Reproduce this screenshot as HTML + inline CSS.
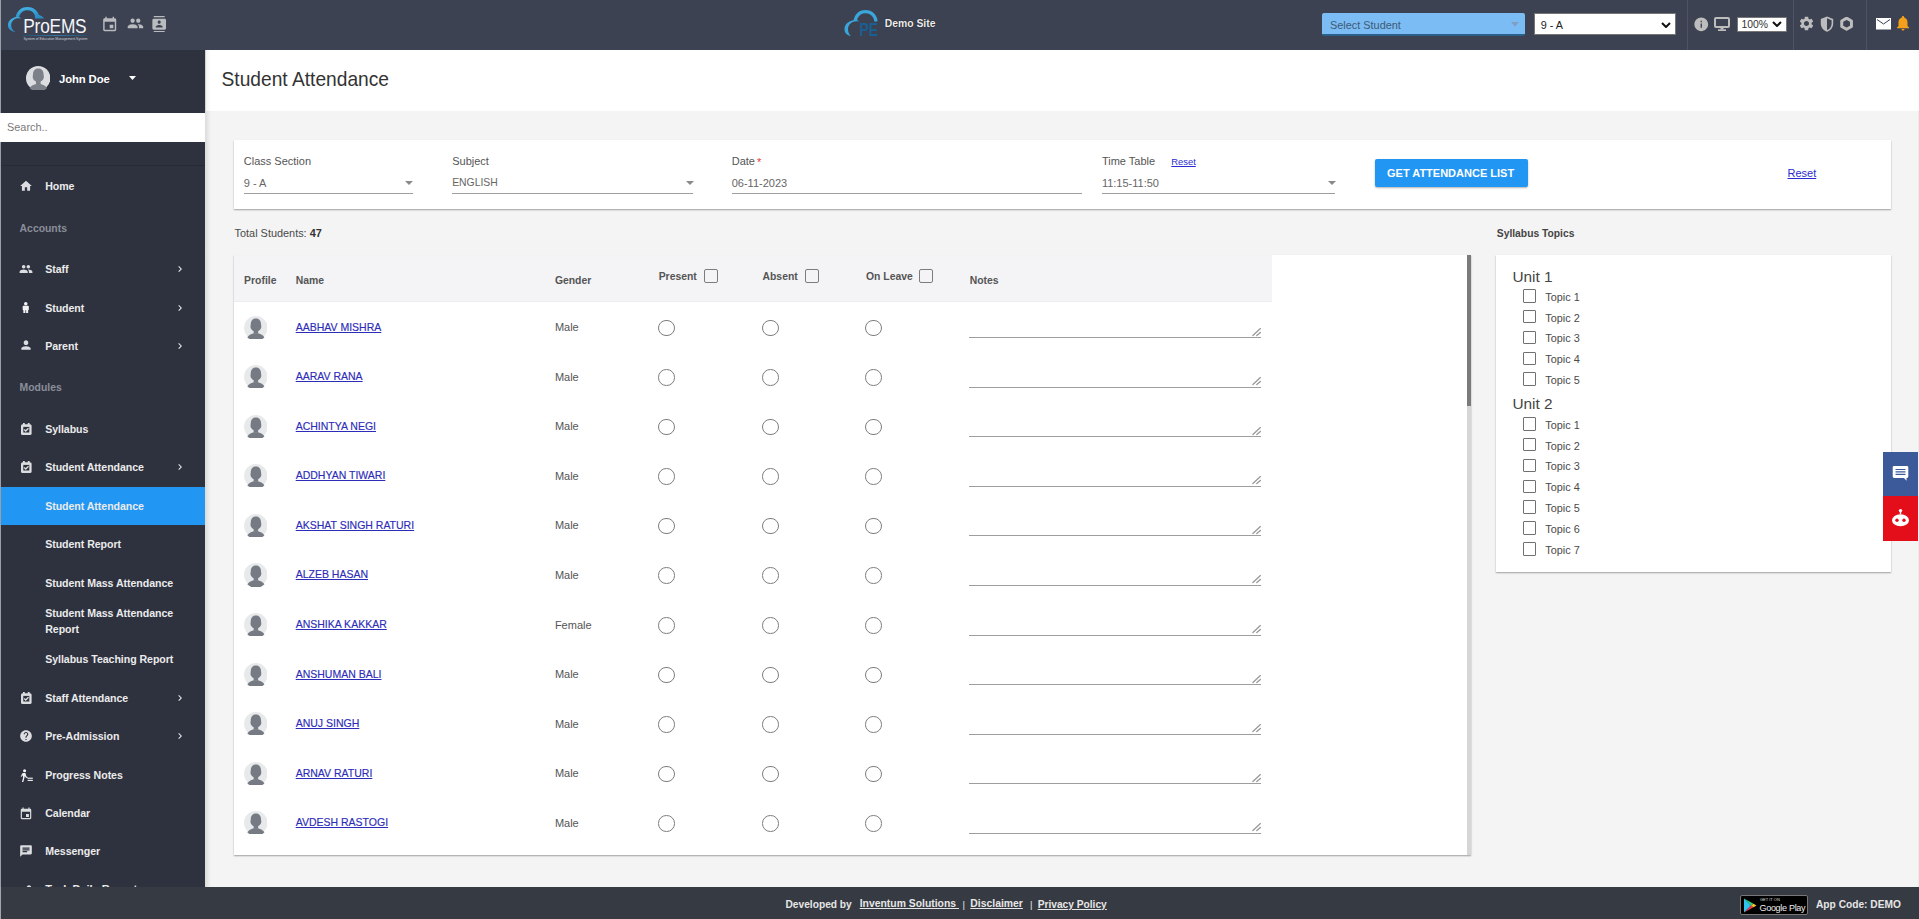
<!DOCTYPE html><html><head><meta charset="utf-8"><title>Student Attendance</title><style>
*{margin:0;padding:0;box-sizing:border-box}
html,body{width:1919px;height:919px;overflow:hidden;background:#f4f4f4;font-family:"Liberation Sans",sans-serif}
.a{position:absolute;display:block}
.t{position:absolute;line-height:1;white-space:nowrap}
.u{text-decoration:underline}
</style></head><body>
<div class="a" style="left:0px;top:0px;width:1919px;height:50px;background:#3c4252"></div>
<svg class="a" style="left:0px;top:0px;" width="50" height="40" viewBox="0 0 50 40"><defs><linearGradient id="lg" x1="0" y1="0" x2="0.3" y2="1"><stop offset="0" stop-color="#45b5e6"/><stop offset="1" stop-color="#2b8dc6"/></linearGradient></defs><path fill="url(#lg)" d="M15.5 17.5 C17 10 22 7 27.5 7 C33 7 37.5 10.5 38.8 14.8 C41 15.5 43 17 44 18.5 L35 18.5 C35.5 13.5 32 10.3 27.5 10.3 C23 10.3 20 13 19 17.5 Z"/><path fill="url(#lg)" d="M21.5 18.3 C19.5 17 18 16.8 16.5 17 C11.5 17.5 8 21 8 25 C8 29 11 31.5 15.5 32 C12.5 30.5 11.2 28 11.2 25.3 C11.2 21 14.5 18.3 18.5 18.3 Z"/></svg>
<div class="t" style="left:23.3px;top:18.75px;font-size:17.3px;color:#f4f6fa;letter-spacing:-0.2px;transform:scaleY(1.13);transform-origin:0 14.65px">ProEMS</div>
<div class="a" style="left:23px;top:35px;width:64px;height:1px;background:linear-gradient(to right,#24506e,#3479a6,#24506e)"></div>
<div class="t" style="left:23.5px;top:38.24px;font-size:3.5px;color:#c8ccd6;letter-spacing:-0.06px">System of Education Management System</div>
<svg class="a" style="left:100.8px;top:15.7px;" width="17.4" height="17.4" viewBox="0 0 24 24"><path fill="#b9bbbf" d="M17 12h-5v5h5v-5zM16 1v2H8V1H6v2H5c-1.11 0-1.99.9-1.99 2L3 19c0 1.1.89 2 2 2h14c1.1 0 2-.9 2-2V5c0-1.1-.9-2-2-2h-1V1h-2zm3 18H5V8h14v11z"/></svg>
<svg class="a" style="left:127.3px;top:15.3px;" width="16.9" height="16.9" viewBox="0 0 24 24"><path fill="#b9bbbf" d="M16 11c1.66 0 2.99-1.34 2.99-3S17.66 5 16 5c-1.66 0-3 1.34-3 3s1.34 3 3 3zm-8 0c1.66 0 2.99-1.34 2.99-3S9.660 5 8 5C6.34 5 5 6.34 5 8s1.34 3 3 3zm0 2c-2.33 0-7 1.17-7 3.5V19h14v-2.5c0-2.33-4.670-3.5-7-3.5zm8 0c-.29 0-.62.02-.97.05 1.16.84 1.97 1.97 1.97 3.45V19h6v-2.5c0-2.33-4.67-3.5-7-3.5z"/></svg>
<svg class="a" style="left:150.6px;top:15.5px;" width="16.4" height="16.4" viewBox="0 0 24 24"><path fill="#b9bbbf" d="M20 0H4v2h16V0zM4 24h16v-2H4v2zM20 4H4c-1.1 0-2 .9-2 2v12c0 1.1.9 2 2 2h16c1.1 0 2-.9 2-2V6c0-1.1-.9-2-2-2zm-8 2.75c1.24 0 2.25 1.01 2.25 2.25s-1.01 2.25-2.25 2.250S9.75 10.24 9.75 9 10.76 6.75 12 6.75zM17 17H7v-1.5c0-1.67 3.33-2.5 5-2.5s5 .83 5 2.5V17z"/></svg>
<svg class="a" style="left:838px;top:3px;" width="50" height="40" viewBox="0 0 50 40"><path fill="#3aa6dc" d="M15.5 17.5 C17 10 22 7 27.5 7 C33 7 37.5 10.5 38.8 14.8 C39.5 16 39.5 17 39.3 18.5 L36.3 18.5 C36 13.5 32 10.3 27.5 10.3 C23 10.3 20 13 19 17.5 Z"/><path fill="#3aa6dc" d="M21.5 18.3 C19.5 17 18 16.8 16.5 17 C11.5 17.5 6.5 21 6.5 26 C6.5 30.5 9.5 32.5 13 33 C11 31.5 10 29 10 26.3 C10 21.5 14 18.3 18.5 18.3 Z"/><text x="21.5" y="33" font-family="Liberation Sans" font-weight="bold" font-size="18.5" textLength="18.5" lengthAdjust="spacingAndGlyphs" fill="#1a5f92">PE</text></svg>
<div class="t" style="left:884.7px;top:19.49px;font-size:10.4px;color:#eeeeee;font-weight:bold;text-shadow:0 0 1px #000">Demo Site</div>
<div class="a" style="left:1322px;top:13px;width:203px;height:23px;background:#7bbcf5;border-radius:2px;border-bottom:2px solid #2d5f8b"></div>
<div class="t" style="left:1330px;top:19.67px;font-size:10.9px;color:#3d5a74;">Select Student</div>
<svg class="a" style="left:1511px;top:22px;" width="8" height="5" viewBox="0 0 8 5"><path d="M0 0h8L4 4.5z" fill="#7f9fc0"/></svg>
<div class="a" style="left:1534px;top:13px;width:142px;height:22px;background:#fff;border:1px solid #767676"></div>
<div class="t" style="left:1540.8px;top:19.76px;font-size:10.8px;color:#222;">9 - A</div>
<svg class="a" style="left:1661px;top:22px;" width="10" height="6" viewBox="0 0 10 6"><path d="M1 1l4 4 4-4" fill="none" stroke="#111" stroke-width="2"/></svg>
<div class="a" style="left:1687px;top:0px;width:1px;height:50px;background:#4f5363"></div>
<div class="a" style="left:1793px;top:0px;width:1px;height:50px;background:#4f5363"></div>
<div class="a" style="left:1866px;top:0px;width:1px;height:50px;background:#4f5363"></div>
<svg class="a" style="left:1693.3px;top:15.8px;" width="16.5" height="16.5" viewBox="0 0 24 24"><path fill="#bdbdbd" d="M12 2C6.48 2 2 6.48 2 12s4.48 10 10 10 10-4.48 10-10S17.52 2 12 2zm1 15h-2v-6h2v6zm0-8h-2V7h2v2z"/></svg>
<svg class="a" style="left:1714px;top:16.5px;" width="16" height="14" viewBox="0 0 16 14"><rect x="1" y="1" width="14" height="9" rx="1" fill="none" stroke="#bdbdbd" stroke-width="2"/><rect x="6.5" y="10" width="3" height="2.5" fill="#bdbdbd"/><rect x="4" y="12.3" width="8" height="1.7" fill="#bdbdbd"/></svg>
<div class="a" style="left:1737px;top:17px;width:50px;height:15px;background:#fff;border:1px solid #767676"></div>
<div class="t" style="left:1741.5px;top:19.59px;font-size:10.4px;color:#333;">100%</div>
<svg class="a" style="left:1772px;top:21px;" width="10" height="6" viewBox="0 0 10 6"><path d="M1 1l4 4 4-4" fill="none" stroke="#111" stroke-width="2"/></svg>
<svg class="a" style="left:1798px;top:15px;" width="17" height="17" viewBox="0 0 24 24"><path fill="#bdbdbd" d="M19.14 12.94c.04-.3.06-.61.06-.94 0-.32-.02-.64-.07-.94l2.03-1.58c.18-.14.23-.41.12-.61l-1.92-3.32c-.12-.22-.37-.29-.59-.22l-2.39.96c-.5-.38-1.03-.7-1.62-.94l-.36-2.54c-.04-.24-.24-.41-.48-.41h-3.84c-.24 0-.43.17-.47.41l-.36 2.54c-.59.24-1.13.57-1.62.94l-2.39-.96c-.22-.08-.47 0-.59.22L2.74 8.87c-.12.21-.08.47.12.61l2.03 1.58c-.05.3-.09.63-.09.94s.02.64.07.94l-2.03 1.58c-.18.14-.23.41-.12.61l1.92 3.32c.12.22.37.29.59.22l2.39-.96c.5.38 1.03.7 1.62.94l.36 2.54c.05.24.24.41.48.41h3.84c.24 0 .44-.17.47-.41l.36-2.54c.59-.24 1.13-.56 1.62-.94l2.39.96c.22.08.47 0 .59-.22l1.92-3.32c.12-.22.07-.47-.12-.61l-2.01-1.58zM12 15.6c-1.98 0-3.6-1.62-3.6-3.6s1.62-3.6 3.6-3.6 3.6 1.62 3.6 3.6-1.62 3.6-3.6 3.6z"/></svg>
<svg class="a" style="left:1820px;top:16px;" width="14" height="16" viewBox="0 0 14 16"><path d="M7 0.5L0.8 3v4.5c0 4 2.7 7.3 6.2 8.2 3.5-.9 6.2-4.2 6.2-8.2V3z" fill="#bdbdbd"/><path d="M7 2.3L11.6 4.2v3.3c0 3.1-2 5.8-4.6 6.6z" fill="#3c4252"/></svg>
<svg class="a" style="left:1840.2px;top:17px;" width="13.2" height="14" viewBox="0 0 14 15"><path d="M7 1.2l5.2 3v6l-5.2 3-5.2-3v-6z" fill="none" stroke="#bdbdbd" stroke-width="3.2" stroke-linejoin="round"/></svg>
<svg class="a" style="left:1876px;top:18px;" width="15" height="12" viewBox="0 0 15 12"><rect x="0" y="0" width="15" height="11.5" fill="#fff"/><path d="M1 1.5l6.5 4.5 6.5-4.5" fill="none" stroke="#3c4252" stroke-width="1"/></svg>
<svg class="a" style="left:1894px;top:14px;" width="18" height="18" viewBox="0 0 24 24"><path fill="#f5a01a" d="M12 22c1.1 0 2-.9 2-2h-4c0 1.1.89 2 2 2zm6-6v-5c0-3.07-1.64-5.64-4.5-6.32V4c0-.83-.67-1.5-1.5-1.5s-1.5.67-1.5 1.5v.68C7.63 5.36 6 7.92 6 11v5l-2 2v1h16v-1l-2-2z"/></svg>
<div class="a" style="left:0px;top:50px;width:205px;height:837px;background:#2e323f"></div>
<div class="a" style="left:0px;top:0px;width:1px;height:919px;background:#9a9ea6"></div>
<div class="a" style="left:205px;top:50px;width:6px;height:837px;background:linear-gradient(to right,rgba(0,0,0,.10),rgba(0,0,0,0))"></div>
<svg class="a" style="left:26.099999999999998px;top:65.8px;" width="24.4" height="24.4" viewBox="0 0 24 24"><circle cx="12" cy="12" r="12" fill="#dcdde0"/><g fill="#7c8189"><path d="M6.9 8.2C6.9 4.4 9.2 2.5 12.1 2.5S17.3 4.4 17.3 8.2L17.6 10.6C17.6 13.6 15.2 15.6 12.1 15.6S6.6 13.6 6.6 10.6Z"/><rect x="9.8" y="13" width="4.6" height="5"/><path d="M3.4 21.6C4.8 19.2 8.2 18.1 10 17.6H14.2C16 18.1 19.4 19.2 20.8 21.6A12 12 0 0 1 3.4 21.6Z"/></g></svg>
<div class="t" style="left:59px;top:73.83px;font-size:11.3px;color:#fff;font-weight:bold;letter-spacing:-0.1px">John Doe</div>
<svg class="a" style="left:129px;top:76px;" width="7" height="4" viewBox="0 0 7 4"><path d="M0 0h7L3.5 4z" fill="#fff"/></svg>
<div class="a" style="left:0px;top:113px;width:205px;height:29px;background:#fff"></div>
<div class="t" style="left:7px;top:121.77px;font-size:10.9px;color:#7a7a7a;">Search..</div>
<div class="a" style="left:1px;top:165px;width:204px;height:1px;background:#272a35"></div>
<div class="t" style="left:45.2px;top:181.02px;font-size:10.6px;color:#ebebeb;font-weight:bold;letter-spacing:-0.05px">Home</div>
<svg class="a" style="left:19.2px;top:178.7px;" width="14" height="14" viewBox="0 0 24 24"><path fill="#dcdde0" d="M10 20v-6h4v6h5v-8h3L12 3 2 12h3v8z"/></svg>
<div class="t" style="left:19.6px;top:223.99px;font-size:10.4px;color:#8a8e98;font-weight:bold;">Accounts</div>
<div class="t" style="left:45.2px;top:263.92px;font-size:10.6px;color:#ebebeb;font-weight:bold;letter-spacing:-0.05px">Staff</div>
<svg class="a" style="left:19px;top:262px;" width="14" height="14" viewBox="0 0 24 24"><path fill="#dcdde0" d="M16 11c1.66 0 2.99-1.34 2.99-3S17.66 5 16 5c-1.66 0-3 1.34-3 3s1.34 3 3 3zm-8 0c1.66 0 2.99-1.34 2.99-3S9.660 5 8 5C6.34 5 5 6.34 5 8s1.34 3 3 3zm0 2c-2.33 0-7 1.17-7 3.5V19h14v-2.5c0-2.33-4.670-3.5-7-3.5zm8 0c-.29 0-.62.02-.97.05 1.16.84 1.97 1.97 1.97 3.45V19h6v-2.5c0-2.33-4.67-3.5-7-3.5z"/></svg>
<svg class="a" style="left:173.7px;top:262.59999999999997px;" width="12" height="12" viewBox="0 0 24 24"><path fill="#ebebeb" d="M10 6L8.59 7.41 13.17 12l-4.58 4.59L10 18l6-6z"/></svg>
<svg class="a" style="left:21.3px;top:301.5px;" width="9.5" height="11.5" viewBox="0 0 10 13"><circle cx="5" cy="2" r="2" fill="#f2f2f2"/><rect x="1.5" y="4.3" width="7" height="5" rx="1" fill="#f2f2f2"/><rect x="2.3" y="9" width="2.3" height="4" fill="#f2f2f2"/><rect x="5.4" y="9" width="2.3" height="4" fill="#f2f2f2"/></svg>
<div class="t" style="left:45.2px;top:303.02px;font-size:10.6px;color:#ebebeb;font-weight:bold;letter-spacing:-0.05px">Student</div>
<svg class="a" style="left:173.7px;top:301.7px;" width="12" height="12" viewBox="0 0 24 24"><path fill="#ebebeb" d="M10 6L8.59 7.41 13.17 12l-4.58 4.59L10 18l6-6z"/></svg>
<div class="t" style="left:45.2px;top:340.82px;font-size:10.6px;color:#ebebeb;font-weight:bold;letter-spacing:-0.05px">Parent</div>
<svg class="a" style="left:19px;top:338px;" width="14" height="14" viewBox="0 0 24 24"><path fill="#dcdde0" d="M12 12c2.21 0 4-1.79 4-4s-1.79-4-4-4-4 1.79-4 4 1.79 4 4 4zm0 2c-2.67 0-8 1.34-8 4v2h16v-2c0-2.66-5.33-4-8-4z"/></svg>
<svg class="a" style="left:173.7px;top:339.5px;" width="12" height="12" viewBox="0 0 24 24"><path fill="#ebebeb" d="M10 6L8.59 7.41 13.17 12l-4.58 4.59L10 18l6-6z"/></svg>
<div class="t" style="left:19.6px;top:382.69px;font-size:10.4px;color:#8a8e98;font-weight:bold;">Modules</div>
<div class="t" style="left:45.2px;top:424.22px;font-size:10.6px;color:#ebebeb;font-weight:bold;letter-spacing:-0.05px">Syllabus</div>
<svg class="a" style="left:21px;top:422.8px;" width="11" height="12" viewBox="0 0 11 12"><rect x="0" y="1.2" width="10.6" height="10.8" rx="1.6" fill="#dcdde0"/><rect x="2.3" y="3.9" width="6" height="5.6" fill="#2e323f"/><path d="M3.2 6.6l1.5 1.4 2.8-2.8" stroke="#dcdde0" stroke-width="1.3" fill="none"/><rect x="2" y="0" width="1.8" height="2" fill="#dcdde0"/><rect x="6.8" y="0" width="1.8" height="2" fill="#dcdde0"/></svg>
<div class="t" style="left:45.2px;top:462.22px;font-size:10.6px;color:#ebebeb;font-weight:bold;letter-spacing:-0.05px">Student Attendance</div>
<svg class="a" style="left:21px;top:460.8px;" width="11" height="12" viewBox="0 0 11 12"><rect x="0" y="1.2" width="10.6" height="10.8" rx="1.6" fill="#dcdde0"/><rect x="2.3" y="3.9" width="6" height="5.6" fill="#2e323f"/><path d="M3.2 6.6l1.5 1.4 2.8-2.8" stroke="#dcdde0" stroke-width="1.3" fill="none"/><rect x="2" y="0" width="1.8" height="2" fill="#dcdde0"/><rect x="6.8" y="0" width="1.8" height="2" fill="#dcdde0"/></svg>
<svg class="a" style="left:173.7px;top:460.9px;" width="12" height="12" viewBox="0 0 24 24"><path fill="#ebebeb" d="M10 6L8.59 7.41 13.17 12l-4.58 4.59L10 18l6-6z"/></svg>
<div class="a" style="left:1px;top:487px;width:204px;height:38px;background:#2196f3"></div>
<div class="t" style="left:45.2px;top:500.92px;font-size:10.6px;color:#ebebeb;font-weight:bold;letter-spacing:-0.05px">Student Attendance</div>
<div class="t" style="left:45.2px;top:539.42px;font-size:10.6px;color:#ebebeb;font-weight:bold;letter-spacing:-0.05px">Student Report</div>
<div class="t" style="left:45.2px;top:578.02px;font-size:10.6px;color:#ebebeb;font-weight:bold;letter-spacing:-0.05px">Student Mass Attendance</div>
<div class="t" style="left:45.2px;top:608.12px;font-size:10.6px;color:#ebebeb;font-weight:bold;letter-spacing:-0.05px">Student Mass Attendance</div>
<div class="t" style="left:45.2px;top:623.82px;font-size:10.6px;color:#ebebeb;font-weight:bold;letter-spacing:-0.05px">Report</div>
<div class="t" style="left:45.2px;top:654.02px;font-size:10.6px;color:#ebebeb;font-weight:bold;letter-spacing:-0.05px">Syllabus Teaching Report</div>
<div class="t" style="left:45.2px;top:692.92px;font-size:10.6px;color:#ebebeb;font-weight:bold;letter-spacing:-0.05px">Staff Attendance</div>
<svg class="a" style="left:21px;top:691.5px;" width="11" height="12" viewBox="0 0 11 12"><rect x="0" y="1.2" width="10.6" height="10.8" rx="1.6" fill="#dcdde0"/><rect x="2.3" y="3.9" width="6" height="5.6" fill="#2e323f"/><path d="M3.2 6.6l1.5 1.4 2.8-2.8" stroke="#dcdde0" stroke-width="1.3" fill="none"/><rect x="2" y="0" width="1.8" height="2" fill="#dcdde0"/><rect x="6.8" y="0" width="1.8" height="2" fill="#dcdde0"/></svg>
<svg class="a" style="left:173.7px;top:691.6px;" width="12" height="12" viewBox="0 0 24 24"><path fill="#ebebeb" d="M10 6L8.59 7.41 13.17 12l-4.58 4.59L10 18l6-6z"/></svg>
<div class="t" style="left:45.2px;top:730.82px;font-size:10.6px;color:#ebebeb;font-weight:bold;letter-spacing:-0.05px">Pre-Admission</div>
<svg class="a" style="left:19px;top:728.5px;" width="14" height="14" viewBox="0 0 24 24"><path fill="#dcdde0" d="M12 2C6.48 2 2 6.48 2 12s4.48 10 10 10 10-4.48 10-10S17.520 2 12 2zm1 17h-2v-2h2v2zm2.07-7.75l-.9.92C13.45 12.9 13 13.5 13 15h-2v-.5c0-1.1.45-2.1 1.17-2.83l1.24-1.26c.37-.36.59-.86.59-1.41 0-1.1-.9-2-2-2s-2 .9-2 2H8c0-2.21 1.79-4 4-4s4 1.79 4 4c0 .88-.36 1.68-.93 2.25z"/></svg>
<svg class="a" style="left:173.7px;top:729.5px;" width="12" height="12" viewBox="0 0 24 24"><path fill="#ebebeb" d="M10 6L8.59 7.41 13.17 12l-4.58 4.59L10 18l6-6z"/></svg>
<svg class="a" style="left:20px;top:768.5px;" width="13.5" height="13" viewBox="0 0 15 15"><circle cx="5" cy="2" r="1.8" fill="#f2f2f2"/><path d="M3 4.5h3l1 4 1.5 1V11L6 9.5 5.3 8 4.5 11.5 3.5 15H2l1.3-5.2L2.8 7.2 1.5 9H0.5l1.6-3.5z" fill="#f2f2f2"/><rect x="8.5" y="10" width="6" height="1.3" fill="#f2f2f2"/><rect x="8.5" y="12.5" width="6" height="1.3" fill="#f2f2f2"/></svg>
<div class="t" style="left:45.2px;top:769.72px;font-size:10.6px;color:#ebebeb;font-weight:bold;letter-spacing:-0.05px">Progress Notes</div>
<div class="t" style="left:45.2px;top:808.02px;font-size:10.6px;color:#ebebeb;font-weight:bold;letter-spacing:-0.05px">Calendar</div>
<svg class="a" style="left:19px;top:806.5px;" width="14" height="14" viewBox="0 0 24 24"><path fill="#dcdde0" d="M17 12h-5v5h5v-5zM16 1v2H8V1H6v2H5c-1.11 0-1.99.9-1.99 2L3 19c0 1.1.89 2 2 2h14c1.1 0 2-.9 2-2V5c0-1.1-.9-2-2-2h-1V1h-2zm3 18H5V8h14v11z"/></svg>
<div class="t" style="left:45.2px;top:846.32px;font-size:10.6px;color:#ebebeb;font-weight:bold;letter-spacing:-0.05px">Messenger</div>
<svg class="a" style="left:19px;top:844px;" width="14" height="14" viewBox="0 0 24 24"><path fill="#dcdde0" d="M20 2H4c-1.1 0-1.99.9-1.99 2L2 22l4-4h14c1.1 0 2-.9 2-2V4c0-1.1-.9-2-2-2zM6 9h12v2H6V9zm8 5H6v-2h8v2zm4-6H6V6h12v2z"/></svg>
<div class="t" style="left:45.2px;top:884.10px;font-size:11.1px;color:#ebebeb;font-weight:bold;letter-spacing:-0.05px">Task Daily Report</div>
<svg class="a" style="left:22px;top:882.5px;" width="14" height="14" viewBox="0 0 24 24"><path fill="#dcdde0" d="M12 12c2.21 0 4-1.79 4-4s-1.79-4-4-4-4 1.79-4 4 1.79 4 4 4zm0 2c-2.67 0-8 1.34-8 4v2h16v-2c0-2.66-5.33-4-8-4z"/></svg>
<div class="a" style="left:206px;top:50px;width:1713px;height:61px;background:#fff"></div>
<div class="a" style="left:205px;top:50px;width:6px;height:61px;background:linear-gradient(to right,rgba(0,0,0,.06),rgba(0,0,0,0))"></div>
<div class="t" style="left:221.5px;top:69.54px;font-size:19.2px;color:#333;transform:scaleY(1.09);transform-origin:0 16.26px">Student Attendance</div>
<div class="a" style="left:234px;top:140px;width:1657px;height:69px;background:#fff;box-shadow:0 1px 1.5px rgba(0,0,0,.35)"></div>
<div class="t" style="left:243.75px;top:155.59px;font-size:11px;color:#555;">Class Section</div>
<div class="t" style="left:243.75px;top:177.89px;font-size:11px;color:#666;">9 - A</div>
<div class="a" style="left:243.75px;top:193px;width:169.55px;height:1px;background:#9e9e9e"></div>
<svg class="a" style="left:405.3px;top:181px;" width="8" height="4" viewBox="0 0 8 4"><path d="M0 0h8L4 4z" fill="#8a8a8a"/></svg>
<div class="t" style="left:452.2px;top:155.59px;font-size:11px;color:#555;">Subject</div>
<div class="t" style="left:452.2px;top:178.39px;font-size:10.4px;color:#666;">ENGLISH</div>
<div class="a" style="left:452.2px;top:193px;width:241.3px;height:1px;background:#9e9e9e"></div>
<svg class="a" style="left:685.5px;top:181px;" width="8" height="4" viewBox="0 0 8 4"><path d="M0 0h8L4 4z" fill="#8a8a8a"/></svg>
<div class="t" style="left:731.7px;top:155.59px;font-size:11px;color:#555;">Date</div>
<div class="t" style="left:731.7px;top:177.89px;font-size:11px;color:#666;">06-11-2023</div>
<div class="a" style="left:731.7px;top:193px;width:350.70000000000005px;height:1px;background:#9e9e9e"></div>
<div class="t" style="left:757px;top:156.69px;font-size:11px;color:#e53935;">*</div>
<div class="t" style="left:1101.9px;top:155.59px;font-size:11px;color:#555;">Time Table</div>
<div class="t" style="left:1101.9px;top:177.89px;font-size:11px;color:#666;">11:15-11:50</div>
<div class="a" style="left:1101.9px;top:193px;width:233.5999999999999px;height:1px;background:#9e9e9e"></div>
<svg class="a" style="left:1327.5px;top:181px;" width="8" height="4" viewBox="0 0 8 4"><path d="M0 0h8L4 4z" fill="#8a8a8a"/></svg>
<div class="t u" style="left:1171.3px;top:157.34px;font-size:9.4px;color:#2a2ad0;">Reset</div>
<div class="a" style="left:1374.5px;top:159px;width:153px;height:28px;background:#2196f3;border-radius:2px;box-shadow:0 1px 2px rgba(0,0,0,.3)"></div>
<div class="t" style="left:1387px;top:167.79px;font-size:11px;color:#fff;font-weight:bold;">GET ATTENDANCE LIST</div>
<div class="t u" style="left:1787.5px;top:168.09px;font-size:11px;color:#2a2ad0;">Reset</div>
<div class="t" style="left:234.6px;top:228.07px;font-size:10.9px;color:#4a4a4a;">Total Students: <b style="color:#333">47</b></div>
<div class="a" style="left:234px;top:255px;width:1237px;height:600px;background:#fff;box-shadow:0 1px 1.5px rgba(0,0,0,.35)"></div>
<div class="a" style="left:234px;top:255px;width:1038px;height:46.5px;background:#f4f4f7;border-bottom:1px solid #ebecef"></div>
<div class="t" style="left:244.1px;top:275.59px;font-size:10.4px;color:#555;font-weight:bold;">Profile</div>
<div class="t" style="left:295.7px;top:275.59px;font-size:10.4px;color:#555;font-weight:bold;">Name</div>
<div class="t" style="left:554.9px;top:275.59px;font-size:10.4px;color:#555;font-weight:bold;">Gender</div>
<div class="t" style="left:658.7px;top:272.19px;font-size:10.4px;color:#555;font-weight:bold;">Present</div>
<div class="t" style="left:762.5px;top:272.19px;font-size:10.4px;color:#555;font-weight:bold;">Absent</div>
<div class="t" style="left:866px;top:272.19px;font-size:10.4px;color:#555;font-weight:bold;">On Leave</div>
<div class="t" style="left:969.7px;top:275.59px;font-size:10.4px;color:#555;font-weight:bold;">Notes</div>
<div class="a" style="left:704.3px;top:269.4px;width:14px;height:13.5px;border:1.6px solid #7c7c7c;border-radius:2px"></div>
<div class="a" style="left:805px;top:269.4px;width:14px;height:13.5px;border:1.6px solid #7c7c7c;border-radius:2px"></div>
<div class="a" style="left:919.4px;top:269.4px;width:14px;height:13.5px;border:1.6px solid #7c7c7c;border-radius:2px"></div>
<svg class="a" style="left:243.5px;top:315.7px;" width="23.6" height="23.6" viewBox="0 0 24 24"><circle cx="12" cy="12" r="12" fill="#e8e9eb"/><g fill="#767b83"><path d="M6.9 8.2C6.9 4.4 9.2 2.5 12.1 2.5S17.3 4.4 17.3 8.2L17.6 10.6C17.6 13.6 15.2 15.6 12.1 15.6S6.6 13.6 6.6 10.6Z"/><rect x="9.8" y="13" width="4.6" height="5"/><path d="M3.4 21.6C4.8 19.2 8.2 18.1 10 17.6H14.2C16 18.1 19.4 19.2 20.8 21.6A12 12 0 0 1 3.4 21.6Z"/></g></svg>
<div class="t u" style="left:295.7px;top:322.01px;font-size:10.5px;color:#2c2cb8;-webkit-text-stroke:0.15px #2c2cb8">AABHAV MISHRA</div>
<div class="t" style="left:554.9px;top:322.39px;font-size:11px;color:#555;">Male</div>
<div class="a" style="left:658.4px;top:319.8px;width:16.5px;height:16.5px;border:1.4px solid #7e7e7e;border-radius:50%"></div>
<div class="a" style="left:762.3px;top:319.8px;width:16.5px;height:16.5px;border:1.4px solid #7e7e7e;border-radius:50%"></div>
<div class="a" style="left:865.4px;top:319.8px;width:16.5px;height:16.5px;border:1.4px solid #7e7e7e;border-radius:50%"></div>
<div class="a" style="left:969px;top:337.3px;width:292.3px;height:1.2px;background:#9e9e9e"></div>
<svg class="a" style="left:1250px;top:327.8px;" width="12" height="10" viewBox="0 0 12 10"><path d="M2.9 7.6L10.4 .6M6.8 7.6L10.4 4.4" stroke="#9a9a9a" stroke-width="1.3" stroke-linecap="round"/></svg>
<svg class="a" style="left:243.5px;top:364.9px;" width="23.6" height="23.6" viewBox="0 0 24 24"><circle cx="12" cy="12" r="12" fill="#e8e9eb"/><g fill="#767b83"><path d="M6.9 8.2C6.9 4.4 9.2 2.5 12.1 2.5S17.3 4.4 17.3 8.2L17.6 10.6C17.6 13.6 15.2 15.6 12.1 15.6S6.6 13.6 6.6 10.6Z"/><rect x="9.8" y="13" width="4.6" height="5"/><path d="M3.4 21.6C4.8 19.2 8.2 18.1 10 17.6H14.2C16 18.1 19.4 19.2 20.8 21.6A12 12 0 0 1 3.4 21.6Z"/></g></svg>
<div class="t u" style="left:295.7px;top:371.21px;font-size:10.5px;color:#2c2cb8;-webkit-text-stroke:0.15px #2c2cb8">AARAV RANA</div>
<div class="t" style="left:554.9px;top:371.59px;font-size:11px;color:#555;">Male</div>
<div class="a" style="left:658.4px;top:369px;width:16.5px;height:16.5px;border:1.4px solid #7e7e7e;border-radius:50%"></div>
<div class="a" style="left:762.3px;top:369px;width:16.5px;height:16.5px;border:1.4px solid #7e7e7e;border-radius:50%"></div>
<div class="a" style="left:865.4px;top:369px;width:16.5px;height:16.5px;border:1.4px solid #7e7e7e;border-radius:50%"></div>
<div class="a" style="left:969px;top:386.5px;width:292.3px;height:1.2px;background:#9e9e9e"></div>
<svg class="a" style="left:1250px;top:377px;" width="12" height="10" viewBox="0 0 12 10"><path d="M2.9 7.6L10.4 .6M6.8 7.6L10.4 4.4" stroke="#9a9a9a" stroke-width="1.3" stroke-linecap="round"/></svg>
<svg class="a" style="left:243.5px;top:414.59999999999997px;" width="23.6" height="23.6" viewBox="0 0 24 24"><circle cx="12" cy="12" r="12" fill="#e8e9eb"/><g fill="#767b83"><path d="M6.9 8.2C6.9 4.4 9.2 2.5 12.1 2.5S17.3 4.4 17.3 8.2L17.6 10.6C17.6 13.6 15.2 15.6 12.1 15.6S6.6 13.6 6.6 10.6Z"/><rect x="9.8" y="13" width="4.6" height="5"/><path d="M3.4 21.6C4.8 19.2 8.2 18.1 10 17.6H14.2C16 18.1 19.4 19.2 20.8 21.6A12 12 0 0 1 3.4 21.6Z"/></g></svg>
<div class="t u" style="left:295.7px;top:420.91px;font-size:10.5px;color:#2c2cb8;-webkit-text-stroke:0.15px #2c2cb8">ACHINTYA NEGI</div>
<div class="t" style="left:554.9px;top:421.29px;font-size:11px;color:#555;">Male</div>
<div class="a" style="left:658.4px;top:418.7px;width:16.5px;height:16.5px;border:1.4px solid #7e7e7e;border-radius:50%"></div>
<div class="a" style="left:762.3px;top:418.7px;width:16.5px;height:16.5px;border:1.4px solid #7e7e7e;border-radius:50%"></div>
<div class="a" style="left:865.4px;top:418.7px;width:16.5px;height:16.5px;border:1.4px solid #7e7e7e;border-radius:50%"></div>
<div class="a" style="left:969px;top:436.2px;width:292.3px;height:1.2px;background:#9e9e9e"></div>
<svg class="a" style="left:1250px;top:426.7px;" width="12" height="10" viewBox="0 0 12 10"><path d="M2.9 7.6L10.4 .6M6.8 7.6L10.4 4.4" stroke="#9a9a9a" stroke-width="1.3" stroke-linecap="round"/></svg>
<svg class="a" style="left:243.5px;top:463.9px;" width="23.6" height="23.6" viewBox="0 0 24 24"><circle cx="12" cy="12" r="12" fill="#e8e9eb"/><g fill="#767b83"><path d="M6.9 8.2C6.9 4.4 9.2 2.5 12.1 2.5S17.3 4.4 17.3 8.2L17.6 10.6C17.6 13.6 15.2 15.6 12.1 15.6S6.6 13.6 6.6 10.6Z"/><rect x="9.8" y="13" width="4.6" height="5"/><path d="M3.4 21.6C4.8 19.2 8.2 18.1 10 17.6H14.2C16 18.1 19.4 19.2 20.8 21.6A12 12 0 0 1 3.4 21.6Z"/></g></svg>
<div class="t u" style="left:295.7px;top:470.21px;font-size:10.5px;color:#2c2cb8;-webkit-text-stroke:0.15px #2c2cb8">ADDHYAN TIWARI</div>
<div class="t" style="left:554.9px;top:470.59px;font-size:11px;color:#555;">Male</div>
<div class="a" style="left:658.4px;top:468px;width:16.5px;height:16.5px;border:1.4px solid #7e7e7e;border-radius:50%"></div>
<div class="a" style="left:762.3px;top:468px;width:16.5px;height:16.5px;border:1.4px solid #7e7e7e;border-radius:50%"></div>
<div class="a" style="left:865.4px;top:468px;width:16.5px;height:16.5px;border:1.4px solid #7e7e7e;border-radius:50%"></div>
<div class="a" style="left:969px;top:485.5px;width:292.3px;height:1.2px;background:#9e9e9e"></div>
<svg class="a" style="left:1250px;top:476px;" width="12" height="10" viewBox="0 0 12 10"><path d="M2.9 7.6L10.4 .6M6.8 7.6L10.4 4.4" stroke="#9a9a9a" stroke-width="1.3" stroke-linecap="round"/></svg>
<svg class="a" style="left:243.5px;top:513.7px;" width="23.6" height="23.6" viewBox="0 0 24 24"><circle cx="12" cy="12" r="12" fill="#e8e9eb"/><g fill="#767b83"><path d="M6.9 8.2C6.9 4.4 9.2 2.5 12.1 2.5S17.3 4.4 17.3 8.2L17.6 10.6C17.6 13.6 15.2 15.6 12.1 15.6S6.6 13.6 6.6 10.6Z"/><rect x="9.8" y="13" width="4.6" height="5"/><path d="M3.4 21.6C4.8 19.2 8.2 18.1 10 17.6H14.2C16 18.1 19.4 19.2 20.8 21.6A12 12 0 0 1 3.4 21.6Z"/></g></svg>
<div class="t u" style="left:295.7px;top:520.01px;font-size:10.5px;color:#2c2cb8;-webkit-text-stroke:0.15px #2c2cb8">AKSHAT SINGH RATURI</div>
<div class="t" style="left:554.9px;top:520.39px;font-size:11px;color:#555;">Male</div>
<div class="a" style="left:658.4px;top:517.8px;width:16.5px;height:16.5px;border:1.4px solid #7e7e7e;border-radius:50%"></div>
<div class="a" style="left:762.3px;top:517.8px;width:16.5px;height:16.5px;border:1.4px solid #7e7e7e;border-radius:50%"></div>
<div class="a" style="left:865.4px;top:517.8px;width:16.5px;height:16.5px;border:1.4px solid #7e7e7e;border-radius:50%"></div>
<div class="a" style="left:969px;top:535.3px;width:292.3px;height:1.2px;background:#9e9e9e"></div>
<svg class="a" style="left:1250px;top:525.8px;" width="12" height="10" viewBox="0 0 12 10"><path d="M2.9 7.6L10.4 .6M6.8 7.6L10.4 4.4" stroke="#9a9a9a" stroke-width="1.3" stroke-linecap="round"/></svg>
<svg class="a" style="left:243.5px;top:563.1000000000001px;" width="23.6" height="23.6" viewBox="0 0 24 24"><circle cx="12" cy="12" r="12" fill="#e8e9eb"/><g fill="#767b83"><path d="M6.9 8.2C6.9 4.4 9.2 2.5 12.1 2.5S17.3 4.4 17.3 8.2L17.6 10.6C17.6 13.6 15.2 15.6 12.1 15.6S6.6 13.6 6.6 10.6Z"/><rect x="9.8" y="13" width="4.6" height="5"/><path d="M3.4 21.6C4.8 19.2 8.2 18.1 10 17.6H14.2C16 18.1 19.4 19.2 20.8 21.6A12 12 0 0 1 3.4 21.6Z"/></g></svg>
<div class="t u" style="left:295.7px;top:569.41px;font-size:10.5px;color:#2c2cb8;-webkit-text-stroke:0.15px #2c2cb8">ALZEB HASAN</div>
<div class="t" style="left:554.9px;top:569.79px;font-size:11px;color:#555;">Male</div>
<div class="a" style="left:658.4px;top:567.2px;width:16.5px;height:16.5px;border:1.4px solid #7e7e7e;border-radius:50%"></div>
<div class="a" style="left:762.3px;top:567.2px;width:16.5px;height:16.5px;border:1.4px solid #7e7e7e;border-radius:50%"></div>
<div class="a" style="left:865.4px;top:567.2px;width:16.5px;height:16.5px;border:1.4px solid #7e7e7e;border-radius:50%"></div>
<div class="a" style="left:969px;top:584.7px;width:292.3px;height:1.2px;background:#9e9e9e"></div>
<svg class="a" style="left:1250px;top:575.2px;" width="12" height="10" viewBox="0 0 12 10"><path d="M2.9 7.6L10.4 .6M6.8 7.6L10.4 4.4" stroke="#9a9a9a" stroke-width="1.3" stroke-linecap="round"/></svg>
<svg class="a" style="left:243.5px;top:612.9000000000001px;" width="23.6" height="23.6" viewBox="0 0 24 24"><circle cx="12" cy="12" r="12" fill="#e8e9eb"/><g fill="#767b83"><path d="M6.9 8.2C6.9 4.4 9.2 2.5 12.1 2.5S17.3 4.4 17.3 8.2L17.6 10.6C17.6 13.6 15.2 15.6 12.1 15.6S6.6 13.6 6.6 10.6Z"/><rect x="9.8" y="13" width="4.6" height="5"/><path d="M3.4 21.6C4.8 19.2 8.2 18.1 10 17.6H14.2C16 18.1 19.4 19.2 20.8 21.6A12 12 0 0 1 3.4 21.6Z"/></g></svg>
<div class="t u" style="left:295.7px;top:619.21px;font-size:10.5px;color:#2c2cb8;-webkit-text-stroke:0.15px #2c2cb8">ANSHIKA KAKKAR</div>
<div class="t" style="left:554.9px;top:619.59px;font-size:11px;color:#555;">Female</div>
<div class="a" style="left:658.4px;top:617px;width:16.5px;height:16.5px;border:1.4px solid #7e7e7e;border-radius:50%"></div>
<div class="a" style="left:762.3px;top:617px;width:16.5px;height:16.5px;border:1.4px solid #7e7e7e;border-radius:50%"></div>
<div class="a" style="left:865.4px;top:617px;width:16.5px;height:16.5px;border:1.4px solid #7e7e7e;border-radius:50%"></div>
<div class="a" style="left:969px;top:634.5px;width:292.3px;height:1.2px;background:#9e9e9e"></div>
<svg class="a" style="left:1250px;top:625px;" width="12" height="10" viewBox="0 0 12 10"><path d="M2.9 7.6L10.4 .6M6.8 7.6L10.4 4.4" stroke="#9a9a9a" stroke-width="1.3" stroke-linecap="round"/></svg>
<svg class="a" style="left:243.5px;top:662.7px;" width="23.6" height="23.6" viewBox="0 0 24 24"><circle cx="12" cy="12" r="12" fill="#e8e9eb"/><g fill="#767b83"><path d="M6.9 8.2C6.9 4.4 9.2 2.5 12.1 2.5S17.3 4.4 17.3 8.2L17.6 10.6C17.6 13.6 15.2 15.6 12.1 15.6S6.6 13.6 6.6 10.6Z"/><rect x="9.8" y="13" width="4.6" height="5"/><path d="M3.4 21.6C4.8 19.2 8.2 18.1 10 17.6H14.2C16 18.1 19.4 19.2 20.8 21.6A12 12 0 0 1 3.4 21.6Z"/></g></svg>
<div class="t u" style="left:295.7px;top:669.01px;font-size:10.5px;color:#2c2cb8;-webkit-text-stroke:0.15px #2c2cb8">ANSHUMAN BALI</div>
<div class="t" style="left:554.9px;top:669.39px;font-size:11px;color:#555;">Male</div>
<div class="a" style="left:658.4px;top:666.8px;width:16.5px;height:16.5px;border:1.4px solid #7e7e7e;border-radius:50%"></div>
<div class="a" style="left:762.3px;top:666.8px;width:16.5px;height:16.5px;border:1.4px solid #7e7e7e;border-radius:50%"></div>
<div class="a" style="left:865.4px;top:666.8px;width:16.5px;height:16.5px;border:1.4px solid #7e7e7e;border-radius:50%"></div>
<div class="a" style="left:969px;top:684.3px;width:292.3px;height:1.2px;background:#9e9e9e"></div>
<svg class="a" style="left:1250px;top:674.8px;" width="12" height="10" viewBox="0 0 12 10"><path d="M2.9 7.6L10.4 .6M6.8 7.6L10.4 4.4" stroke="#9a9a9a" stroke-width="1.3" stroke-linecap="round"/></svg>
<svg class="a" style="left:243.5px;top:711.9000000000001px;" width="23.6" height="23.6" viewBox="0 0 24 24"><circle cx="12" cy="12" r="12" fill="#e8e9eb"/><g fill="#767b83"><path d="M6.9 8.2C6.9 4.4 9.2 2.5 12.1 2.5S17.3 4.4 17.3 8.2L17.6 10.6C17.6 13.6 15.2 15.6 12.1 15.6S6.6 13.6 6.6 10.6Z"/><rect x="9.8" y="13" width="4.6" height="5"/><path d="M3.4 21.6C4.8 19.2 8.2 18.1 10 17.6H14.2C16 18.1 19.4 19.2 20.8 21.6A12 12 0 0 1 3.4 21.6Z"/></g></svg>
<div class="t u" style="left:295.7px;top:718.21px;font-size:10.5px;color:#2c2cb8;-webkit-text-stroke:0.15px #2c2cb8">ANUJ SINGH</div>
<div class="t" style="left:554.9px;top:718.59px;font-size:11px;color:#555;">Male</div>
<div class="a" style="left:658.4px;top:716px;width:16.5px;height:16.5px;border:1.4px solid #7e7e7e;border-radius:50%"></div>
<div class="a" style="left:762.3px;top:716px;width:16.5px;height:16.5px;border:1.4px solid #7e7e7e;border-radius:50%"></div>
<div class="a" style="left:865.4px;top:716px;width:16.5px;height:16.5px;border:1.4px solid #7e7e7e;border-radius:50%"></div>
<div class="a" style="left:969px;top:733.5px;width:292.3px;height:1.2px;background:#9e9e9e"></div>
<svg class="a" style="left:1250px;top:724px;" width="12" height="10" viewBox="0 0 12 10"><path d="M2.9 7.6L10.4 .6M6.8 7.6L10.4 4.4" stroke="#9a9a9a" stroke-width="1.3" stroke-linecap="round"/></svg>
<svg class="a" style="left:243.5px;top:761.6000000000001px;" width="23.6" height="23.6" viewBox="0 0 24 24"><circle cx="12" cy="12" r="12" fill="#e8e9eb"/><g fill="#767b83"><path d="M6.9 8.2C6.9 4.4 9.2 2.5 12.1 2.5S17.3 4.4 17.3 8.2L17.6 10.6C17.6 13.6 15.2 15.6 12.1 15.6S6.6 13.6 6.6 10.6Z"/><rect x="9.8" y="13" width="4.6" height="5"/><path d="M3.4 21.6C4.8 19.2 8.2 18.1 10 17.6H14.2C16 18.1 19.4 19.2 20.8 21.6A12 12 0 0 1 3.4 21.6Z"/></g></svg>
<div class="t u" style="left:295.7px;top:767.91px;font-size:10.5px;color:#2c2cb8;-webkit-text-stroke:0.15px #2c2cb8">ARNAV RATURI</div>
<div class="t" style="left:554.9px;top:768.29px;font-size:11px;color:#555;">Male</div>
<div class="a" style="left:658.4px;top:765.7px;width:16.5px;height:16.5px;border:1.4px solid #7e7e7e;border-radius:50%"></div>
<div class="a" style="left:762.3px;top:765.7px;width:16.5px;height:16.5px;border:1.4px solid #7e7e7e;border-radius:50%"></div>
<div class="a" style="left:865.4px;top:765.7px;width:16.5px;height:16.5px;border:1.4px solid #7e7e7e;border-radius:50%"></div>
<div class="a" style="left:969px;top:783.2px;width:292.3px;height:1.2px;background:#9e9e9e"></div>
<svg class="a" style="left:1250px;top:773.7px;" width="12" height="10" viewBox="0 0 12 10"><path d="M2.9 7.6L10.4 .6M6.8 7.6L10.4 4.4" stroke="#9a9a9a" stroke-width="1.3" stroke-linecap="round"/></svg>
<svg class="a" style="left:243.5px;top:810.9000000000001px;" width="23.6" height="23.6" viewBox="0 0 24 24"><circle cx="12" cy="12" r="12" fill="#e8e9eb"/><g fill="#767b83"><path d="M6.9 8.2C6.9 4.4 9.2 2.5 12.1 2.5S17.3 4.4 17.3 8.2L17.6 10.6C17.6 13.6 15.2 15.6 12.1 15.6S6.6 13.6 6.6 10.6Z"/><rect x="9.8" y="13" width="4.6" height="5"/><path d="M3.4 21.6C4.8 19.2 8.2 18.1 10 17.6H14.2C16 18.1 19.4 19.2 20.8 21.6A12 12 0 0 1 3.4 21.6Z"/></g></svg>
<div class="t u" style="left:295.7px;top:817.21px;font-size:10.5px;color:#2c2cb8;-webkit-text-stroke:0.15px #2c2cb8">AVDESH RASTOGI</div>
<div class="t" style="left:554.9px;top:817.59px;font-size:11px;color:#555;">Male</div>
<div class="a" style="left:658.4px;top:815px;width:16.5px;height:16.5px;border:1.4px solid #7e7e7e;border-radius:50%"></div>
<div class="a" style="left:762.3px;top:815px;width:16.5px;height:16.5px;border:1.4px solid #7e7e7e;border-radius:50%"></div>
<div class="a" style="left:865.4px;top:815px;width:16.5px;height:16.5px;border:1.4px solid #7e7e7e;border-radius:50%"></div>
<div class="a" style="left:969px;top:832.5px;width:292.3px;height:1.2px;background:#9e9e9e"></div>
<svg class="a" style="left:1250px;top:823px;" width="12" height="10" viewBox="0 0 12 10"><path d="M2.9 7.6L10.4 .6M6.8 7.6L10.4 4.4" stroke="#9a9a9a" stroke-width="1.3" stroke-linecap="round"/></svg>
<div class="a" style="left:1466.5px;top:255px;width:4px;height:600px;background:#d6d6d6"></div>
<div class="a" style="left:1466.5px;top:255px;width:4px;height:151px;background:#7b7b7b"></div>
<div class="t" style="left:1496.8px;top:229.28px;font-size:10.3px;color:#444;font-weight:bold;">Syllabus Topics</div>
<div class="a" style="left:1496px;top:255px;width:395px;height:317px;background:#fff;box-shadow:0 1px 1.5px rgba(0,0,0,.35)"></div>
<div class="t" style="left:1512.4px;top:268.66px;font-size:15.4px;color:#444;">Unit 1</div>
<div class="a" style="left:1522.8px;top:289.0px;width:13.5px;height:13.5px;border:1.5px solid #707070;border-radius:1px"></div>
<div class="t" style="left:1545.3px;top:291.77px;font-size:10.9px;color:#4a4a4a;">Topic 1</div>
<div class="a" style="left:1522.8px;top:309.85px;width:13.5px;height:13.5px;border:1.5px solid #707070;border-radius:1px"></div>
<div class="t" style="left:1545.3px;top:312.62px;font-size:10.9px;color:#4a4a4a;">Topic 2</div>
<div class="a" style="left:1522.8px;top:330.7px;width:13.5px;height:13.5px;border:1.5px solid #707070;border-radius:1px"></div>
<div class="t" style="left:1545.3px;top:333.47px;font-size:10.9px;color:#4a4a4a;">Topic 3</div>
<div class="a" style="left:1522.8px;top:351.55px;width:13.5px;height:13.5px;border:1.5px solid #707070;border-radius:1px"></div>
<div class="t" style="left:1545.3px;top:354.32px;font-size:10.9px;color:#4a4a4a;">Topic 4</div>
<div class="a" style="left:1522.8px;top:372.4px;width:13.5px;height:13.5px;border:1.5px solid #707070;border-radius:1px"></div>
<div class="t" style="left:1545.3px;top:375.17px;font-size:10.9px;color:#4a4a4a;">Topic 5</div>
<div class="t" style="left:1512.4px;top:396.46px;font-size:15.4px;color:#444;">Unit 2</div>
<div class="a" style="left:1522.8px;top:417.0px;width:13.5px;height:13.5px;border:1.5px solid #707070;border-radius:1px"></div>
<div class="t" style="left:1545.3px;top:419.77px;font-size:10.9px;color:#4a4a4a;">Topic 1</div>
<div class="a" style="left:1522.8px;top:437.85px;width:13.5px;height:13.5px;border:1.5px solid #707070;border-radius:1px"></div>
<div class="t" style="left:1545.3px;top:440.62px;font-size:10.9px;color:#4a4a4a;">Topic 2</div>
<div class="a" style="left:1522.8px;top:458.7px;width:13.5px;height:13.5px;border:1.5px solid #707070;border-radius:1px"></div>
<div class="t" style="left:1545.3px;top:461.47px;font-size:10.9px;color:#4a4a4a;">Topic 3</div>
<div class="a" style="left:1522.8px;top:479.55px;width:13.5px;height:13.5px;border:1.5px solid #707070;border-radius:1px"></div>
<div class="t" style="left:1545.3px;top:482.32px;font-size:10.9px;color:#4a4a4a;">Topic 4</div>
<div class="a" style="left:1522.8px;top:500.4px;width:13.5px;height:13.5px;border:1.5px solid #707070;border-radius:1px"></div>
<div class="t" style="left:1545.3px;top:503.17px;font-size:10.9px;color:#4a4a4a;">Topic 5</div>
<div class="a" style="left:1522.8px;top:521.25px;width:13.5px;height:13.5px;border:1.5px solid #707070;border-radius:1px"></div>
<div class="t" style="left:1545.3px;top:524.02px;font-size:10.9px;color:#4a4a4a;">Topic 6</div>
<div class="a" style="left:1522.8px;top:542.1px;width:13.5px;height:13.5px;border:1.5px solid #707070;border-radius:1px"></div>
<div class="t" style="left:1545.3px;top:544.87px;font-size:10.9px;color:#4a4a4a;">Topic 7</div>
<div class="a" style="left:1882.5px;top:451.5px;width:36px;height:44.5px;background:#3c5a9a"></div>
<svg class="a" style="left:1892px;top:465px;" width="17" height="16" viewBox="0 0 24 22"><path fill="#fff" d="M3 1h18c1.1 0 2 .9 2 2v13c0 1.1-.9 2-2 2h-0.5v4l-3.5-4H3c-1.1 0-2-.9-2-2V3c0-1.1.9-2 2-2z"/><path d="M5 6h14M5 9.5h14M5 13h14" stroke="#3c5a9a" stroke-width="1.6"/></svg>
<div class="a" style="left:1882.5px;top:496px;width:36px;height:45px;background:#e30e1a"></div>
<svg class="a" style="left:1891px;top:508px;" width="19" height="19" viewBox="0 0 19 19"><circle cx="9.5" cy="2.6" r="1.7" fill="#fff"/><rect x="8.8" y="3" width="1.4" height="3" fill="#fff"/><ellipse cx="9.5" cy="12.2" rx="8.5" ry="6" fill="#fff"/><circle cx="6" cy="12.2" r="1.7" fill="#e30e1a"/><circle cx="13" cy="12.2" r="1.7" fill="#e30e1a"/></svg>
<div class="a" style="left:1918px;top:111px;width:1px;height:776px;background:#ebebeb"></div>
<div class="a" style="left:1918px;top:451.5px;width:1px;height:89.5px;background:rgba(255,255,255,.3)"></div>
<div class="a" style="left:0px;top:887px;width:1919px;height:32px;background:#363a42"></div>
<div class="a" style="left:0px;top:887px;width:1px;height:32px;background:#a2a6ab"></div>
<div class="t" style="left:785.5px;top:899.66px;font-size:10.2px;color:#e6e6e6;font-weight:bold;">Developed by</div>
<div class="t u" style="left:859.7px;top:899.49px;font-size:10.4px;color:#e6e6e6;font-weight:bold;">Inventum Solutions&nbsp;</div>
<div class="t" style="left:962.5px;top:900.26px;font-size:9.5px;color:#e6e6e6;">|</div>
<div class="t u" style="left:970.3px;top:899.49px;font-size:10.4px;color:#e6e6e6;font-weight:bold;">Disclaimer</div>
<div class="t" style="left:1030px;top:900.26px;font-size:9.5px;color:#e6e6e6;">|</div>
<div class="t u" style="left:1037.7px;top:899.66px;font-size:10.2px;color:#e6e6e6;font-weight:bold;">Privacy Policy</div>
<div class="a" style="left:1739.5px;top:895px;width:68.5px;height:20px;background:#000;border:1px solid #777;border-radius:2px"></div>
<svg class="a" style="left:1743px;top:897.5px;" width="14" height="15" viewBox="0 0 14 15"><path d="M1 0.5L8 7.5 1 14.5z" fill="#2fc3f0"/><path d="M1 0.5L10.5 5.8 8 7.5z" fill="#35d07f"/><path d="M1 14.5L10.5 9.2 8 7.5z" fill="#ee3b4c"/><path d="M10.5 5.8L13.5 7.5 10.5 9.2 8 7.5z" fill="#fbc02d"/></svg>
<div class="t" style="left:1760px;top:898.11px;font-size:4px;color:#ddd;">GET IT ON</div>
<div class="t" style="left:1759.5px;top:903.68px;font-size:9px;color:#eee;letter-spacing:-0.3px">Google Play</div>
<div class="t" style="left:1816px;top:899.56px;font-size:10.2px;color:#e6e6e6;font-weight:bold;">App Code: DEMO</div>
</body></html>
